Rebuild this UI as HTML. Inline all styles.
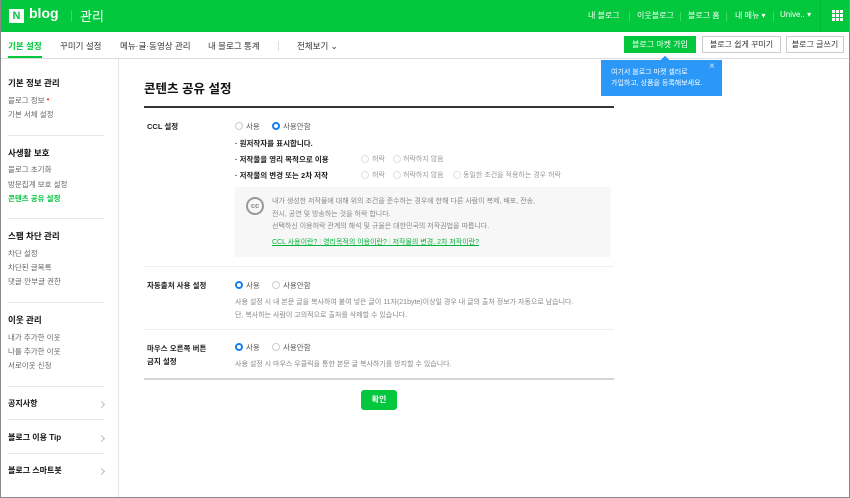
<!DOCTYPE html>
<html><head><meta charset="utf-8"><style>
*{margin:0;padding:0;box-sizing:border-box}
body{width:850px;height:498px;overflow:hidden;background:#fff;font-family:"Liberation Sans","Noto Sans CJK KR",sans-serif;position:relative;color:#333}
.a{position:absolute;white-space:nowrap}
.frame{position:absolute;left:0;top:0;width:850px;height:498px;border:1px solid #8a8a8a;border-top:none;pointer-events:none;z-index:9}
.hdr{position:absolute;left:0;top:0;width:850px;height:32px;background:#03c73c}
.w{color:#fff;font-size:8px}
.sep{position:absolute;width:1px;height:9px;background:#3cd866;top:12px}
.nav{font-size:8.5px;color:#333;top:40px}
.btn{position:absolute;top:36px;height:17px;font-size:8px;line-height:15px;text-align:center;border:1px solid #ccc;background:#fff;color:#333}
.sb{font-size:7.5px;color:#666}
.sh{font-size:8.5px;font-weight:bold;color:#111}
.hr{position:absolute;left:8px;width:96px;height:1px;background:#e8e8e8}
.lbl{font-size:7.5px;font-weight:bold;color:#222}
.t{font-size:7.5px;color:#555}
.g{font-size:7px;color:#888}
.r{position:absolute;width:8px;height:8px;border:1px solid #ccc;border-radius:50%;background:#fff}
.r.on{border:2.5px solid #1a7ff0}
.chev{position:absolute;width:5px;height:5px;border-top:1px solid #bbb;border-right:1px solid #bbb;transform:rotate(45deg)}
</style></head><body>
<div class="hdr"></div>
<div class="a" style="left:9px;top:9px;width:15px;height:14px;background:#fff;color:#03c73c;font-weight:bold;font-size:11px;line-height:14px;text-align:center">N</div>
<div class="a w" style="left:29px;top:5px;font-size:14px;font-weight:bold">blog</div>
<div class="sep" style="left:71px;top:10px;height:12px"></div>
<div class="a w" style="left:80px;top:6px;font-size:13px">관리</div>
<div class="a w" style="left:588px;top:10px">내 블로그</div><div class="sep" style="left:629px"></div>
<div class="a w" style="left:637px;top:10px">이웃블로그</div><div class="sep" style="left:680px"></div>
<div class="a w" style="left:688px;top:10px">블로그 홈</div><div class="sep" style="left:726px"></div>
<div class="a w" style="left:735px;top:10px">내 메뉴 ▾</div><div class="sep" style="left:773px"></div>
<div class="a w" style="left:780px;top:10px">Unive.. ▾</div>
<div class="a" style="left:820px;top:0;width:1px;height:32px;background:#02b535"></div>
<svg class="a" style="left:832px;top:10px" width="11" height="11"><g fill="#fff"><rect x="0" y="0" width="3" height="3"/><rect x="4" y="0" width="3" height="3"/><rect x="8" y="0" width="3" height="3"/><rect x="0" y="4" width="3" height="3"/><rect x="4" y="4" width="3" height="3"/><rect x="8" y="4" width="3" height="3"/><rect x="0" y="8" width="3" height="3"/><rect x="4" y="8" width="3" height="3"/><rect x="8" y="8" width="3" height="3"/></g></svg>

<div class="a nav" style="left:8px;color:#03c73c;font-weight:bold">기본 설정</div>
<div class="a" style="left:8px;top:56px;width:34px;height:2px;background:#03c73c"></div>
<div class="a nav" style="left:60px">꾸미기 설정</div>
<div class="a nav" style="left:120px">메뉴·글·동영상 관리</div>
<div class="a nav" style="left:208px">내 블로그 통계</div>
<div class="a" style="left:278px;top:41px;width:1px;height:10px;background:#ddd"></div>
<div class="a nav" style="left:297px">전체보기 ⌄</div>
<div class="btn" style="left:624px;width:72px;background:#03c73c;border-color:#03c73c;color:#fff">블로그 마켓 가입</div>
<div class="btn" style="left:702px;width:79px">블로그 쉽게 꾸미기</div>
<div class="btn" style="left:786px;width:58px">블로그 글쓰기</div>
<div class="a" style="left:0;top:58px;width:850px;height:1px;background:#ddd"></div>
<div class="a" style="left:118px;top:59px;width:1px;height:439px;background:#e5e5e5"></div>

<div class="a" style="left:601px;top:60px;width:121px;height:36px;background:#2b97f7;z-index:3"></div>
<div class="a" style="left:233px;top:0"></div>
<div class="a" style="left:662px;top:57px;width:6px;height:6px;background:#2b97f7;transform:rotate(45deg);z-index:3"></div>
<div class="a" style="left:611px;top:67px;font-size:7px;color:#fff;line-height:11px;z-index:4">여기서 블로그 마켓 셀러로<br>가입하고, 상품을 등록해보세요.</div>
<div class="a" style="left:709px;top:61px;font-size:10px;color:#cfe6ff;z-index:4">×</div>

<div class="a sh" style="left:8px;top:77px">기본 정보 관리</div>
<div class="a sb" style="left:8px;top:95px">블로그 정보 <span style="color:#e33;font-size:8px;vertical-align:top">•</span></div>
<div class="a sb" style="left:8px;top:109px">기본 서체 설정</div>
<div class="hr" style="top:135px"></div>
<div class="a sh" style="left:8px;top:147px">사생활 보호</div>
<div class="a sb" style="left:8px;top:164px">블로그 초기화</div>
<div class="a sb" style="left:8px;top:179px">방문집계 보호 설정</div>
<div class="a sb" style="left:8px;top:193px;color:#03c73c;font-weight:bold">콘텐츠 공유 설정</div>
<div class="hr" style="top:218px"></div>
<div class="a sh" style="left:8px;top:230px">스팸 차단 관리</div>
<div class="a sb" style="left:8px;top:248px">차단 설정</div>
<div class="a sb" style="left:8px;top:262px">차단된 글목록</div>
<div class="a sb" style="left:8px;top:276px">댓글·안부글 권한</div>
<div class="hr" style="top:302px"></div>
<div class="a sh" style="left:8px;top:314px">이웃 관리</div>
<div class="a sb" style="left:8px;top:332px">내가 추가한 이웃</div>
<div class="a sb" style="left:8px;top:346px">나를 추가한 이웃</div>
<div class="a sb" style="left:8px;top:360px">서로이웃 신청</div>
<div class="hr" style="top:386px"></div>
<div class="a sh" style="left:8px;top:398px;font-size:8px">공지사항</div><div class="chev" style="left:99px;top:402px"></div>
<div class="hr" style="top:419px"></div>
<div class="a sh" style="left:8px;top:432px;font-size:8px">블로그 이용 Tip</div><div class="chev" style="left:99px;top:436px"></div>
<div class="hr" style="top:453px"></div>
<div class="a sh" style="left:8px;top:465px;font-size:8px">블로그 스마트봇</div><div class="chev" style="left:99px;top:469px"></div>

<div class="a" style="left:144px;top:78px;font-size:12.5px;font-weight:bold;color:#111">콘텐츠 공유 설정</div>
<div class="a" style="left:144px;top:106px;width:470px;height:2px;background:#333"></div>

<div class="a lbl" style="left:147px;top:121px">CCL 설정</div>
<div class="r" style="left:235px;top:122px"></div><div class="a t" style="left:246px;top:121px">사용</div>
<div class="r on" style="left:272px;top:122px"></div><div class="a t" style="left:283px;top:121px">사용안함</div>
<div class="a lbl" style="left:235px;top:138px">· 원저작자를 표시합니다.</div>
<div class="a lbl" style="left:235px;top:154px">· 저작물을 영리 목적으로 이용</div>
<div class="r" style="left:361px;top:155px;border-color:#e2e2e2"></div><div class="a g" style="left:372px;top:154px;color:#999">허락</div>
<div class="r" style="left:393px;top:155px;border-color:#e2e2e2"></div><div class="a g" style="left:403px;top:154px;color:#999">허락하지 않음</div>
<div class="a lbl" style="left:235px;top:170px">· 저작물의 변경 또는 2차 저작</div>
<div class="r" style="left:361px;top:171px;border-color:#e2e2e2"></div><div class="a g" style="left:372px;top:170px;color:#999">허락</div>
<div class="r" style="left:393px;top:171px;border-color:#e2e2e2"></div><div class="a g" style="left:403px;top:170px;color:#999">허락하지 않음</div>
<div class="r" style="left:453px;top:171px;border-color:#e2e2e2"></div><div class="a g" style="left:463px;top:170px;color:#999">동일한 조건을 적용하는 경우 허락</div>

<div class="a" style="left:235px;top:187px;width:376px;height:70px;background:#f7f7f7"></div>
<div class="a" style="left:246px;top:197px;width:18px;height:18px;border:2px solid #999;border-radius:50%;font-size:7.5px;font-weight:bold;color:#888;text-align:center;line-height:14px">cc</div>
<div class="a g" style="left:272px;top:196px;line-height:12.5px">내가 생성한 저작물에 대해 위의 조건을 준수하는 경우에 한해 다른 사람이 복제, 배포, 전송,<br>전시, 공연 및 방송하는 것을 허락 합니다.<br>선택하신 이용허락 관계의 해석 및 규율은 대한민국의 저작권법을 따릅니다.</div>
<div class="a" style="left:272px;top:237px;font-size:7px;color:#03b53a;text-decoration:underline">CCL 사용이란?<span style="color:#ccc;text-decoration:none"> | </span>영리목적의 이용이란?<span style="color:#ccc"> | </span>저작물의 변경, 2차 저작이란?</div>

<div class="a" style="left:144px;top:266px;width:470px;height:1px;background:#eee"></div>
<div class="a lbl" style="left:147px;top:280px">자동출처 사용 설정</div>
<div class="r on" style="left:235px;top:281px"></div><div class="a t" style="left:246px;top:280px">사용</div>
<div class="r" style="left:272px;top:281px"></div><div class="a t" style="left:283px;top:280px">사용안함</div>
<div class="a g" style="left:235px;top:296px;line-height:13px">사용 설정 시 내 본문 글을 복사하여 붙여 넣은 글이 11자(21byte)이상일 경우 내 글의 출처 정보가 자동으로 남습니다.<br>단, 복사하는 사람이 고의적으로 출처를 삭제할 수 있습니다.</div>
<div class="a" style="left:144px;top:329px;width:470px;height:1px;background:#eee"></div>
<div class="a lbl" style="left:147px;top:342px;line-height:13px">마우스 오른쪽 버튼<br>금지 설정</div>
<div class="r on" style="left:235px;top:343px"></div><div class="a t" style="left:246px;top:342px">사용</div>
<div class="r" style="left:272px;top:343px"></div><div class="a t" style="left:283px;top:342px">사용안함</div>
<div class="a g" style="left:235px;top:359px">사용 설정 시 마우스 우클릭을 통한 본문 글 복사하기를 방지할 수 있습니다.</div>
<div class="a" style="left:144px;top:378px;width:470px;height:2px;background:#d5d5d5"></div>
<div class="a" style="left:361px;top:390px;width:36px;height:20px;background:#03c73c;border-radius:3px;color:#fff;font-size:8px;font-weight:bold;text-align:center;line-height:20px">확인</div>
<div class="frame"></div>
</body></html>
